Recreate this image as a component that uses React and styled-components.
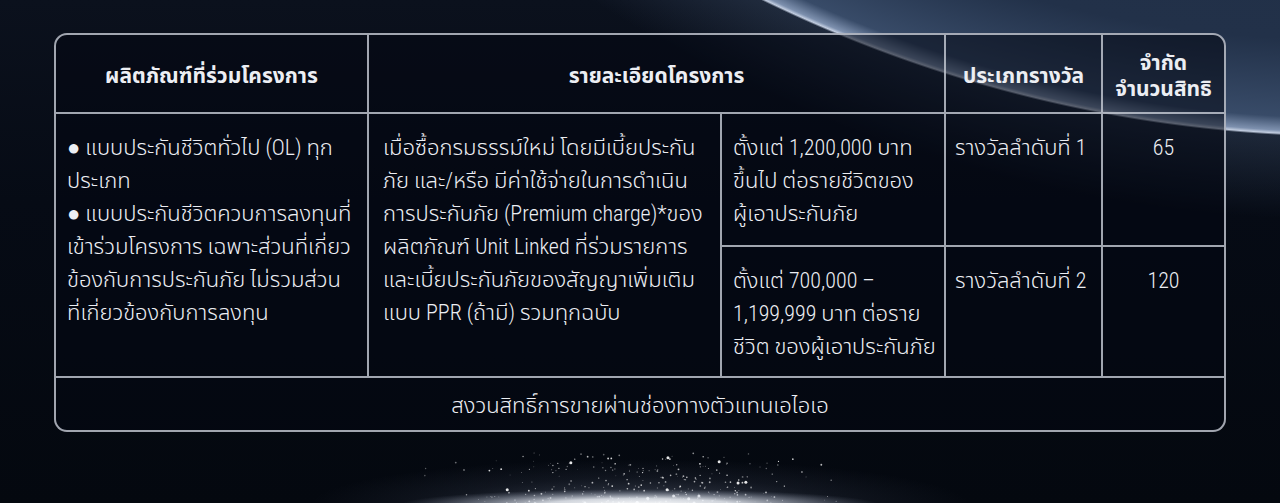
import React from "react";
import styled, { createGlobalStyle } from "styled-components";

const Global = createGlobalStyle`
  html, body { margin: 0; padding: 0; background: #050a14; }
  body { width: 1280px; height: 503px; overflow: hidden; }
  * { box-sizing: border-box; }
`;

const LINE = "rgba(196, 201, 211, 0.82)";

const Page = styled.div`
  position: relative;
  width: 1280px;
  height: 503px;
  overflow: hidden;
  padding: 33px 0 0 54px;
  font-family: "Roboto Condensed", "Liberation Sans Narrow", "Noto Sans Thai", "Noto Sans Thai UI", "Loma", "Noto Sans", sans-serif;
  color: #eceef3;
  background:
    radial-gradient(circle 1336px at 1350px -1200px,
      #182335 0px, #223149 1240px, #384b68 1318px, #7d90ae 1332px, #c2cde0 1335px, rgba(8,14,26,0.0) 1337px),
    radial-gradient(circle 1420px at 1350px -1200px,
      rgba(70, 90, 120, 0.35) 1336px, rgba(10, 16, 28, 0) 1420px),
    linear-gradient(180deg, #0b111d 0%, #060b15 40%, #04080f 100%);
`;

const Sparkle = styled.svg`
  position: absolute;
  left: 0;
  bottom: 0;
  width: 1280px;
  height: 70px;
  pointer-events: none;
`;

const Table = styled.div`
  position: relative;
  z-index: 1;
  width: 1172px;
  display: grid;
  grid-template-columns: 313px 353px 224px 157px 121px;
  grid-template-rows: 79px 133px 131px 52px;
  border: 2px solid ${LINE};
  border-radius: 13px;
  overflow: hidden;
  background: rgba(3, 8, 18, 0.55);
`;

const Cell = styled.div`
  grid-column: ${(p) => p.$col};
  grid-row: ${(p) => p.$row};
  border-right: ${(p) => (p.$noRight ? "none" : `2px solid ${LINE}`)};
  border-bottom: ${(p) => (p.$noBottom ? "none" : `2px solid ${LINE}`)};
  font-size: 22px;
  font-weight: 300;
  line-height: 33px;
  padding: ${(p) => p.$pad || "17px 10px 0 10px"};
  text-align: ${(p) => (p.$center ? "center" : "left")};
`;

const HeadCell = styled(Cell)`
  display: flex;
  flex-direction: column;
  align-items: center;
  justify-content: center;
  padding: 4px 6px 0;
  font-weight: 700;
  font-size: 21px;
  line-height: 26px;
`;

const FootCell = styled(Cell)`
  display: flex;
  align-items: center;
  justify-content: center;
  padding: 3px 0 0;
  font-size: 22px;
`;

const Line = styled.span`
  display: block;
  white-space: nowrap;
`;

function rng(seed) {
  let s = seed;
  return () => {
    s = (s * 16807) % 2147483647;
    return (s - 1) / 2147483646;
  };
}

const dots = (() => {
  const r = rng(42);
  const out = [];
  for (let i = 0; i < 320; i++) {
    const u = r() + r() + r();
    const x = 640 + (u / 3 - 0.5) * 2 * 240;
    const y = 70 - Math.pow(r(), 1.4) * 50;
    const big = r() < 0.05;
    const size = big ? 1.5 : r() * 0.6 + 0.35;
    const op = big ? 0.9 : 0.3 + r() * 0.55;
    out.push({ x, y, size, op });
  }
  return out;
})();

function SparkleArt() {
  return (
    <Sparkle viewBox="0 0 1280 70">
      <defs>
        <radialGradient id="glow" cx="50%" cy="50%" r="50%">
          <stop offset="0%" stopColor="#ffffff" stopOpacity="1" />
          <stop offset="40%" stopColor="#eef2f8" stopOpacity="0.85" />
          <stop offset="75%" stopColor="#b8c0d0" stopOpacity="0.35" />
          <stop offset="100%" stopColor="#8892a8" stopOpacity="0" />
        </radialGradient>
        <radialGradient id="haze" cx="50%" cy="50%" r="50%">
          <stop offset="0%" stopColor="#a0aac0" stopOpacity="0.4" />
          <stop offset="60%" stopColor="#6a7490" stopOpacity="0.12" />
          <stop offset="100%" stopColor="#6a7490" stopOpacity="0" />
        </radialGradient>
        <filter id="soft" x="-50%" y="-50%" width="200%" height="200%">
          <feGaussianBlur stdDeviation="0.4" />
        </filter>
      </defs>
      <ellipse cx="640" cy="72" rx="330" ry="46" fill="url(#haze)" />
      <g filter="url(#soft)">
        {dots.map((d, i) => (
          <circle key={i} cx={d.x} cy={d.y} r={d.size} fill="#ffffff" opacity={d.op} />
        ))}
      </g>
      <ellipse cx="640" cy="72" rx="240" ry="16" fill="url(#glow)" />
    </Sparkle>
  );
}

export default function App() {
  return (
    <Page>
      <Global />
      <SparkleArt />
      <Table>
        <HeadCell $col="1" $row="1">ผลิตภัณฑ์ที่ร่วมโครงการ</HeadCell>
        <HeadCell $col="2 / span 2" $row="1">รายละเอียดโครงการ</HeadCell>
        <HeadCell $col="4" $row="1">ประเภทรางวัล</HeadCell>
        <HeadCell $col="5" $row="1" $noRight>
          <Line>จำกัด</Line>
          <Line>จำนวนสิทธิ</Line>
        </HeadCell>

        <Cell $col="1" $row="2 / span 2" $pad="17px 6px 0 11px">
          <Line>● แบบประกันชีวิตทั่วไป (OL) ทุก</Line>
          <Line>ประเภท</Line>
          <Line>● แบบประกันชีวิตควบการลงทุนที่</Line>
          <Line>เข้าร่วมโครงการ เฉพาะส่วนที่เกี่ยว</Line>
          <Line>ข้องกับการประกันภัย ไม่รวมส่วน</Line>
          <Line>ที่เกี่ยวข้องกับการลงทุน</Line>
        </Cell>
        <Cell $col="2" $row="2 / span 2" $pad="17px 6px 0 14px">
          <Line>เมื่อซื้อกรมธรรม์ใหม่ โดยมีเบี้ยประกัน</Line>
          <Line>ภัย และ/หรือ มีค่าใช้จ่ายในการดำเนิน</Line>
          <Line>การประกันภัย (Premium charge)*ของ</Line>
          <Line>ผลิตภัณฑ์ Unit Linked ที่ร่วมรายการ</Line>
          <Line>และเบี้ยประกันภัยของสัญญาเพิ่มเติม</Line>
          <Line>แบบ PPR (ถ้ามี) รวมทุกฉบับ</Line>
        </Cell>

        <Cell $col="3" $row="2" $pad="17px 4px 0 11px">
          <Line>ตั้งแต่ 1,200,000 บาท</Line>
          <Line>ขึ้นไป ต่อรายชีวิตของ</Line>
          <Line>ผู้เอาประกันภัย</Line>
        </Cell>
        <Cell $col="4" $row="2" $pad="17px 4px 0 9px">
          <Line>รางวัลลำดับที่ 1</Line>
        </Cell>
        <Cell $col="5" $row="2" $noRight $center $pad="17px 0 0 0">
          <Line>65</Line>
        </Cell>

        <Cell $col="3" $row="3" $pad="17px 4px 0 11px">
          <Line>ตั้งแต่ 700,000 –</Line>
          <Line>1,199,999 บาท ต่อราย</Line>
          <Line>ชีวิต ของผู้เอาประกันภัย</Line>
        </Cell>
        <Cell $col="4" $row="3" $pad="17px 4px 0 9px">
          <Line>รางวัลลำดับที่ 2</Line>
        </Cell>
        <Cell $col="5" $row="3" $noRight $center $pad="17px 0 0 0">
          <Line>120</Line>
        </Cell>

        <FootCell $col="1 / -1" $row="4" $noRight $noBottom>
          สงวนสิทธิ์การขายผ่านช่องทางตัวแทนเอไอเอ
        </FootCell>
      </Table>
    </Page>
  );
}
